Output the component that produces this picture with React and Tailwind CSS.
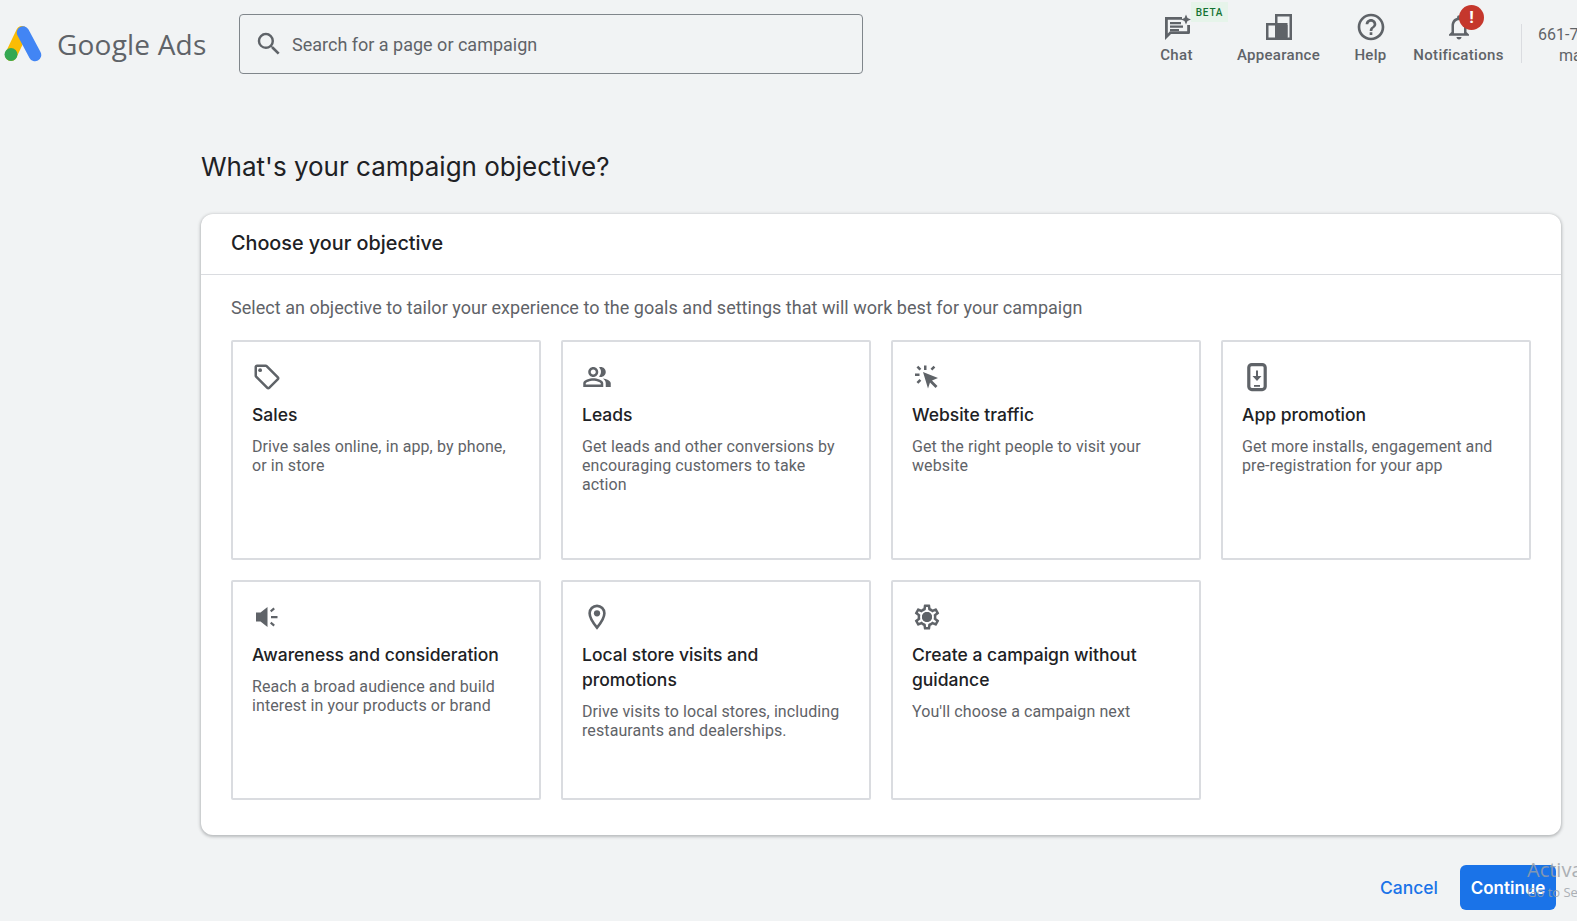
import React from 'react';
import { MdSearch, MdHelpOutline, MdOutlineNotifications, MdOutlineLocalOffer, MdOutlinePeopleAlt, MdOutlineSettings } from 'react-icons/md';

const GoogleAdsLogo = () => (
  <svg width="38" height="36" viewBox="0 0 38 36" className="shrink-0">
    <path d="M18 6 L7 29" stroke="#fbbc04" strokeWidth="12" strokeLinecap="round" fill="none" />
    <path d="M19 6.500 L31 29" stroke="#4285f4" strokeWidth="12.500" strokeLinecap="round" fill="none" />
    <circle cx="7" cy="28.500" r="6.500" fill="#34a853" />
  </svg>
);

const ChatIcon = () => (
  <svg width="30" height="30" viewBox="0 0 30 30" fill="#5f6368">
    <path fillRule="evenodd" d="M3 5h17v2.800H5.800v13.700L8 19.200h17.200V13H28v7.500c0 1-.8 1.500-1.500 1.500H9l-6 6V5z" />
    <path d="M8 10h11v2.200H8zM8 13.600h13v2.200H8zM8 17h9v2H8z" />
    <path d="M24 2.500l1.500 3.500 3.500 1.500-3.500 1.500-1.500 3.500-1.500-3.500-3.500-1.500 3.500-1.500z" />
  </svg>
);

const AppearanceIcon = () => (
  <svg width="30" height="30" viewBox="0 0 30 30" fill="#5f6368">
    <path fillRule="evenodd" d="M11 2h17v26H2V11h9V2zM13.500 4.500v6.500h10v14.500h2V4.500zM4.500 13.500v12h6.500v-12z" />
    <path d="M13.500 13h10v12.500h-10z" />
  </svg>
);

const TrafficIcon = () => (
  <svg width="30" height="30" viewBox="0 0 30 30" fill="#5f6368">
    <path d="M11 10l15 6-6 2.500 5.500 5.500-2 2-5.500-5.500-2 6z" />
    <path d="M12 3.500h2.500V8H12zM3 11.500h4.500V14H3zM4.500 5.500l1.800-1.800 3 3-1.800 1.800zM21.500 3.700l1.800 1.800-3 3-1.800-1.800zM6.300 21.800l-1.800-1.800 3-3 1.800 1.800z" />
  </svg>
);

const PhoneIcon = () => (
  <svg width="30" height="30" viewBox="0 0 30 30" fill="#5f6368">
    <rect x="6.800" y="2.600" width="16.400" height="25" rx="3" fill="none" stroke="#5f6368" strokeWidth="3.200" />
    <path d="M14 8.500h2v5.500h3.500l-4.500 5-4.500-5H14z" />
    <path d="M12 23h6v1.800h-6z" />
  </svg>
);

const MegaphoneIcon = () => (
  <svg width="30" height="30" viewBox="0 0 30 30" fill="#5f6368">
    <path d="M4 10.500h4.500L15.500 5v20l-7-5.500H4z" />
    <path d="M19 14h6.500v2.200H19zM18 8.500l3.500-3 1.400 1.700-3.500 3zM18 21.500l1.400-1.700 3.500 3-1.400 1.700z" />
  </svg>
);

const PinIcon = () => (
  <svg width="30" height="30" viewBox="0 0 24 24" fill="#5f6368">
    <path d="M12 3.100C8.700 3.100 6.100 5.700 6.100 9c0 4.400 5.900 11.500 5.900 11.500S17.900 13.400 17.900 9c0-3.300-2.600-5.900-5.900-5.900z" fill="none" stroke="#5f6368" strokeWidth="2.100" />
    <circle cx="12" cy="9" r="2.500" />
  </svg>
);

const GearIcon = () => (
  <div className="relative w-[30px] h-[30px]">
    <MdOutlineSettings size={30} color="#5f6368" />
    <span className="absolute left-[10px] top-[10px] w-[10px] h-[10px] rounded-full bg-[#5f6368]" />
  </div>
);

const objectives = [
  { icon: <MdOutlineLocalOffer size={30} color="#5f6368" />, title: 'Sales', text: 'Drive sales online, in app, by phone, or in store' },
  { icon: <MdOutlinePeopleAlt size={30} color="#5f6368" />, title: 'Leads', text: 'Get leads and other conversions by encouraging customers to take action' },
  { icon: <TrafficIcon />, title: 'Website traffic', text: 'Get the right people to visit your website' },
  { icon: <PhoneIcon />, title: 'App promotion', text: 'Get more installs, engagement and pre-registration for your app' },
  { icon: <MegaphoneIcon />, title: 'Awareness and consideration', text: 'Reach a broad audience and build interest in your products or brand' },
  { icon: <PinIcon />, title: 'Local store visits and promotions', text: 'Drive visits to local stores, including restaurants and dealerships.' },
  { icon: <GearIcon />, title: 'Create a campaign without guidance', text: "You'll choose a campaign next" },
];

const NavItem = ({ icon, label, className, children }) => (
  <div className={`relative shrink-0 flex flex-col items-center ${className}`}>
    <div className="h-[30px] flex items-center justify-center">{icon}</div>
    <span className="mt-[3px] text-[15px] leading-[20px] font-medium tracking-[0.3px] text-[#5f6368] whitespace-nowrap">{label}</span>
    {children}
  </div>
);

const Header = () => (
  <header className="h-[88px] flex items-start overflow-hidden">
    <div className="shrink-0 flex items-center w-[239px] h-[60px] mt-[14px] pl-[4px]">
      <GoogleAdsLogo />
      <span className="ml-[15px] text-[28px] text-[#5f6368] whitespace-nowrap font-['Open_Sans',sans-serif] tracking-[0.2px]">Google Ads</span>
    </div>
    <div className="shrink-0 flex items-center w-[624px] h-[60px] mt-[14px] border border-[#80868b] rounded-[4px] pl-[14px]">
      <MdSearch size={30} color="#5f6368" />
      <span className="ml-[8px] text-[18px] text-[#5f6368]">Search for a page or campaign</span>
    </div>
    <nav className="shrink-0 flex items-start mt-[12px] ml-[297px]">
      <NavItem icon={<ChatIcon />} label="Chat" className="w-[33px]">
        <span className="absolute left-[31px] -top-[10px] w-[37px] h-[20px] flex items-center justify-center bg-[#e6f4ea] text-[#137333] text-[10px] font-medium tracking-[0.8px]">BETA</span>
      </NavItem>
      <NavItem icon={<AppearanceIcon />} label="Appearance" className="w-[83px] ml-[44px]" />
      <NavItem icon={<MdHelpOutline size={32} color="#5f6368" />} label="Help" className="w-[33px] ml-[34px]" />
      <NavItem icon={<MdOutlineNotifications size={30} color="#5f6368" />} label="Notifications" className="w-[91px] ml-[26px]">
        <span className="absolute left-[46px] -top-[7px] w-[25px] h-[25px] rounded-full bg-[#c5372c] text-white text-[17px] font-bold flex items-center justify-center">!</span>
      </NavItem>
      <div className="shrink-0 w-px h-[39px] bg-[#dadce0] ml-[17px] mt-[12px]" />
      <div className="shrink-0 ml-[16px] mt-[12px] text-[16px] leading-[21px] text-[#5f6368] whitespace-nowrap">
        <div>661-7</div>
        <div className="ml-[21px]">ma</div>
      </div>
    </nav>
  </header>
);

const ObjectiveTile = ({ icon, title, text }) => (
  <div className="h-[220px] border-2 border-[#dadce0] rounded-[2px] pt-[20px] pl-[19px] pr-[26px]">
    <div className="h-[30px]">{icon}</div>
    <div className="mt-[10px] text-[17.500px] leading-[25px] font-medium text-[#202124] font-['Inter',sans-serif]">{title}</div>
    <p className="mt-[10px] text-[16px] leading-[19px] tracking-[0.1px] text-[#5f6368]">{text}</p>
  </div>
);

export default function App() {
  return (
    <div className="relative w-full h-[921px] overflow-hidden bg-[#f1f3f4] font-['Roboto',sans-serif]">
      <Header />
      <main className="ml-[201px] w-[1360px]">
        <h1 className="mt-[59px] text-[26px] leading-[40px] text-[#202124] font-['Inter',sans-serif]">What's your campaign objective?</h1>
        <section className="mt-[27px] h-[621px] bg-white rounded-[12px] shadow-[0_1px_3px_1px_rgba(60,64,67,0.3)]">
          <div className="h-[61px] flex items-center px-[30px] pb-[1px] border-b border-[#dadce0]">
            <h2 className="text-[19.800px] font-medium text-[#202124] font-['Inter',sans-serif]">Choose your objective</h2>
          </div>
          <div className="px-[30px] pt-[22px]">
            <p className="text-[18px] leading-[22px] tracking-[0.03px] text-[#5f6368]">Select an objective to tailor your experience to the goals and settings that will work best for your campaign</p>
            <div className="mt-[21px] grid grid-cols-[repeat(4,309.500px)] gap-x-[20.500px] gap-y-[20px]">
              {objectives.map((item, index) => (
                <ObjectiveTile key={index} icon={item.icon} title={item.title} text={item.text} />
              ))}
            </div>
          </div>
        </section>
        <div className="mt-[30px] flex items-center justify-end gap-[22px] pr-[5px]">
          <button className="pt-[2px] text-[17.500px] font-medium text-[#1a73e8] font-['Inter',sans-serif]">Cancel</button>
          <button className="w-[96px] h-[45px] pt-[2px] rounded-[6px] bg-[#1a73e8] text-white text-[17px] font-semibold font-['Inter',sans-serif]">Continue</button>
        </div>
      </main>
      <div className="absolute left-[1527px] top-[857px] whitespace-nowrap text-[#9aa0a6] opacity-80 font-['Open_Sans',sans-serif]">
        <div className="text-[20px] leading-[26px]">Activate Windows</div>
        <div className="text-[13px] leading-[18px]">Go to Settings to activate Windows.</div>
      </div>
    </div>
  );
}
